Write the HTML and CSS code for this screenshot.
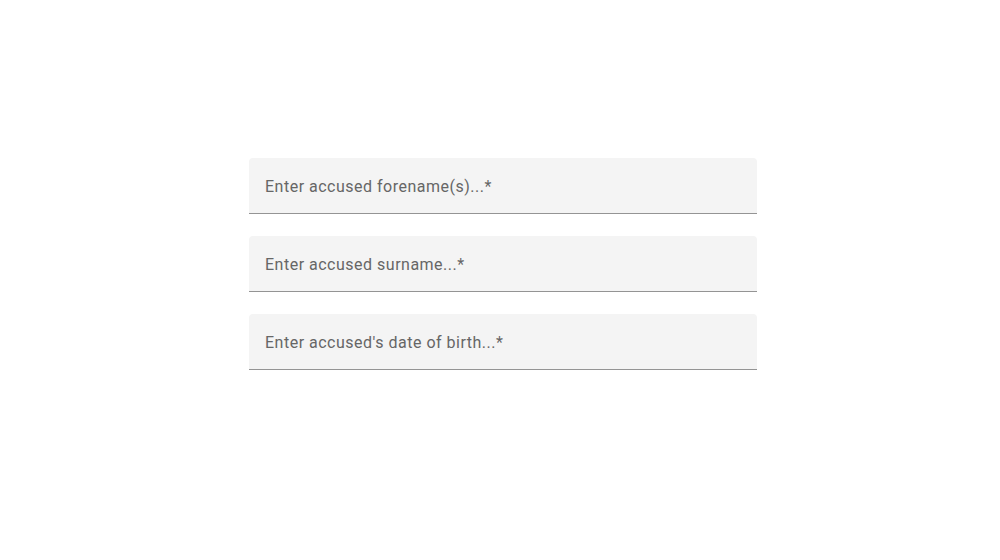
FILE: index.html
```html
<!DOCTYPE html>
<html lang="en">
<head>
<meta charset="utf-8">
<title>Accused details</title>
<link rel="stylesheet" href="styles.css">
</head>
<body>
<form class="form">
  <div class="field"><span class="label">Enter accused forename(s)...*</span></div>
  <div class="field"><span class="label">Enter accused surname...*</span></div>
  <div class="field"><span class="label">Enter accused's date of birth...*</span></div>
</form>
</body>
</html>
```
FILE: styles.css
```css
html, body {
  margin: 0;
  padding: 0;
  background: #ffffff;
}
body {
  font-family: Roboto, "Noto Sans", Arial, sans-serif;
}
.form {
  width: 508px;
  margin: 0 0 0 249px;
  padding-top: 158px;
  display: flex;
  flex-direction: column;
  gap: 22px;
}
.field {
  box-sizing: border-box;
  height: 56px;
  background: #f4f4f4;
  border-radius: 4px 4px 0 0;
  border-bottom: 1px solid #949494;
  padding: 0 16px;
  display: flex;
  align-items: center;
}
.label {
  font-size: 16px;
  color: #666666;
  letter-spacing: 0.5px;
  line-height: 20px;
  padding-top: 2px;
}
```
